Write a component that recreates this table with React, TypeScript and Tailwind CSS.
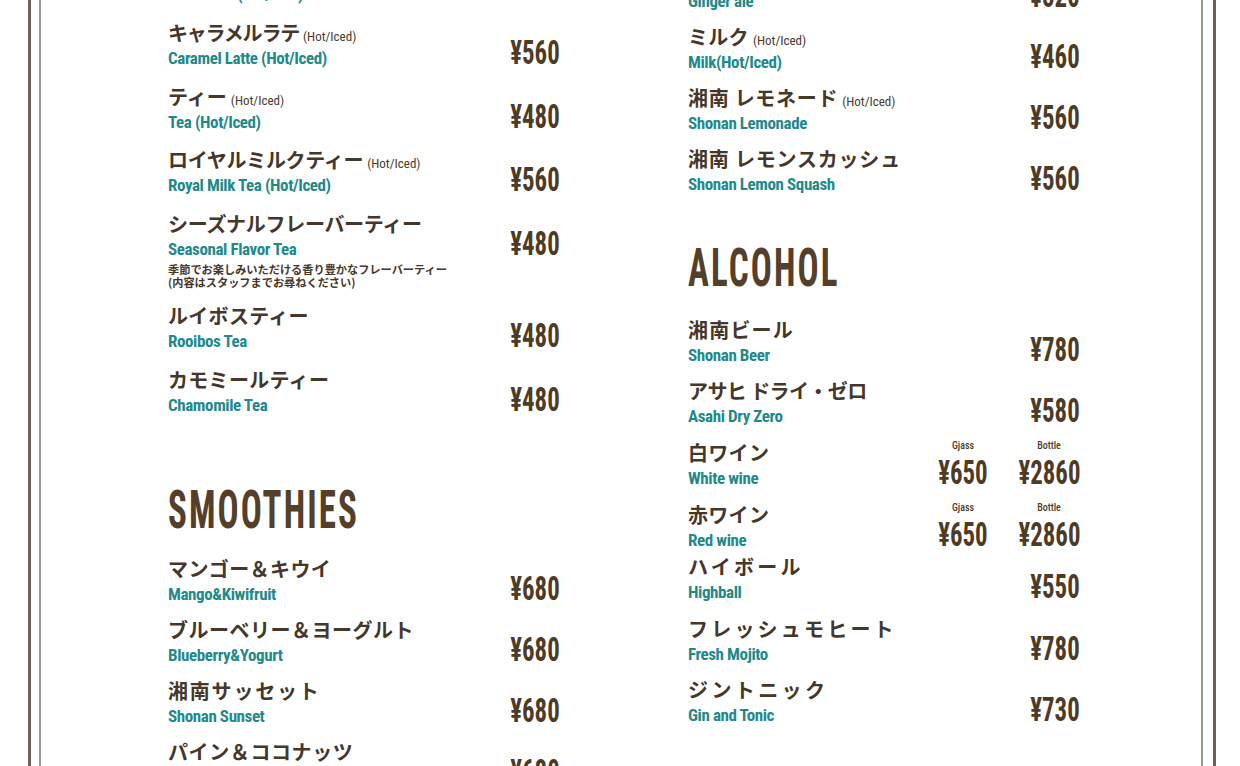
type Item = {
  jp: string;
  note?: string;
  en: string;
  price?: string;
  wine?: [string, string];
  desc?: string[];
  mt: string;
  jpClass?: string;
};

const leftTop: Item[] = [
  { jp: "カフェラテ", note: "(Hot/Iced)", en: "Cafe Latte (Hot/Iced)", price: "¥520", mt: "mt-0" },
  { jp: "キャラメルラテ", note: "(Hot/Iced)", en: "Caramel Latte (Hot/Iced)", price: "¥560", mt: "mt-[16px]", jpClass: "tracking-[-1.2px]" },
  { jp: "ティー", note: "(Hot/Iced)", en: "Tea (Hot/Iced)", price: "¥480", mt: "mt-[16px]" },
  { jp: "ロイヤルミルクティー", note: "(Hot/Iced)", en: "Royal Milk Tea (Hot/Iced)", price: "¥560", mt: "mt-[15px]", jpClass: "tracking-[-0.3px]" },
  {
    jp: "シーズナルフレーバーティー",
    en: "Seasonal Flavor Tea",
    price: "¥480",
    desc: ["季節でお楽しみいただける香り豊かなフレーバーティー", "(内容はスタッフまでお尋ねください)"],
    mt: "mt-[16px]",
    jpClass: "tracking-[-0.3px]",
  },
  { jp: "ルイボスティー", en: "Rooibos Tea", price: "¥480", mt: "mt-[17px]", jpClass: "tracking-[0.3px]" },
  { jp: "カモミールティー", en: "Chamomile Tea", price: "¥480", mt: "mt-[16px]", jpClass: "tracking-[0.3px]" },
];

const smoothies: Item[] = [
  { jp: "マンゴー＆キウイ", en: "Mango&Kiwifruit", price: "¥680", mt: "mt-[19px]", jpClass: "tracking-[0.4px]" },
  { jp: "ブルーベリー＆ヨーグルト", en: "Blueberry&Yogurt", price: "¥680", mt: "mt-[13px]", jpClass: "tracking-[0.5px]" },
  { jp: "湘南サッセット", en: "Shonan Sunset", price: "¥680", mt: "mt-[13px]", jpClass: "tracking-[1.8px]" },
  { jp: "パイン＆ココナッツ", en: "Pineapple&Coconut", price: "¥680", mt: "mt-[13px]", jpClass: "tracking-[0.6px]" },
];

const rightTop: Item[] = [
  { jp: "ジンジャーエール", en: "Ginger ale", price: "¥520", mt: "mt-0" },
  { jp: "ミルク", note: "(Hot/Iced)", en: "Milk(Hot/Iced)", price: "¥460", mt: "mt-[13px]", jpClass: "tracking-[0.3px]" },
  { jp: "湘南 レモネード", note: "(Hot/Iced)", en: "Shonan Lemonade", price: "¥560", mt: "mt-[13px]", jpClass: "tracking-[0.7px]" },
  { jp: "湘南 レモンスカッシュ", en: "Shonan Lemon Squash", price: "¥560", mt: "mt-[13px]", jpClass: "tracking-[0.8px]" },
];

const alcohol: Item[] = [
  { jp: "湘南ビール", en: "Shonan Beer", price: "¥780", mt: "mt-[22px]", jpClass: "tracking-[1.2px]" },
  { jp: "アサヒ ドライ・ゼロ", en: "Asahi Dry Zero", price: "¥580", mt: "mt-[13px]", jpClass: "tracking-[-0.6px]" },
  { jp: "白ワイン", en: "White wine", wine: ["¥650", "¥2860"], mt: "mt-[14px]", jpClass: "tracking-[0.3px]" },
  { jp: "赤ワイン", en: "Red wine", wine: ["¥650", "¥2860"], mt: "mt-[14px]", jpClass: "tracking-[0.3px]" },
  { jp: "ハイボール", en: "Highball", price: "¥550", mt: "mt-[4px]", jpClass: "tracking-[3.2px]" },
  { jp: "フレッシュモヒート", en: "Fresh Mojito", price: "¥780", mt: "mt-[14px]", jpClass: "tracking-[3.2px]" },
  { jp: "ジントニック", en: "Gin and Tonic", price: "¥730", mt: "mt-[13px]", jpClass: "tracking-[3.4px]" },
];

function Price({ value }: { value: string }) {
  return (
    <span className="-mb-[1px] inline-block origin-right scale-x-[0.73] font-['Roboto_Condensed',sans-serif] text-[34px] font-bold leading-none text-[#4e3b25]">
      {value}
    </span>
  );
}

function WineCell({ label, value, w }: { label: string; value: string; w: string }) {
  return (
    <div className={`flex flex-col items-center ${w}`}>
      <span className="mb-[3px] font-['Roboto_Condensed',sans-serif] text-[10px] font-medium leading-[12px] text-[#4e3b25]">
        {label}
      </span>
      <span className="-mb-[1px] inline-block origin-center scale-x-[0.73] font-['Roboto_Condensed',sans-serif] text-[34px] font-bold leading-none text-[#4e3b25]">
        {value}
      </span>
    </div>
  );
}

function MenuItem({ item }: { item: Item }) {
  return (
    <div className={item.mt}>
      <div className="flex items-end justify-between">
        <div className="flex flex-col">
          <div
            className={`h-[26px] whitespace-nowrap font-['Noto_Sans_CJK_JP',sans-serif] text-[20px] font-bold leading-[26px] text-[#45372a] ${item.jpClass ?? ""}`}
          >
            {item.jp}
            {item.note && (
              <span className="ml-1 font-['Roboto_Condensed',sans-serif] text-[13px] font-normal leading-none tracking-normal text-[#4a3b2c]">
                {item.note}
              </span>
            )}
          </div>
          <div className="mt-[2px] font-['Roboto_Condensed',sans-serif] text-[17px] font-bold leading-[20px] tracking-[-0.4px] text-[#1f8a8a]">
            {item.en}
          </div>
        </div>
        {item.price && <Price value={item.price} />}
        {item.wine && (
          <div className="flex gap-[30px]">
            <WineCell label="Gjass" value={item.wine[0]} w="w-[50px]" />
            <WineCell label="Bottle" value={item.wine[1]} w="w-[62px]" />
          </div>
        )}
      </div>
      {item.desc && (
        <div className="mt-1 -mb-[3px] font-['Noto_Sans_CJK_JP',sans-serif] text-[11.2px] font-semibold leading-[13px] text-[#45372a]">
          {item.desc.map((d) => (
            <div key={d}>{d}</div>
          ))}
        </div>
      )}
    </div>
  );
}

function Heading({ text, mt }: { text: string; mt: string }) {
  return (
    <div className={`${mt} h-[53px]`}>
      <div className="inline-block origin-left scale-x-[0.66] font-['Roboto_Condensed',sans-serif] text-[53px] font-bold leading-none tracking-[0.06em] text-[#54402a]">
        {text}
      </div>
    </div>
  );
}

export default function App() {
  return (
    <div className="h-[766px] w-[1240px] overflow-hidden bg-white">
      <div className="ml-[28px] h-full w-[1188px] border-x-[3px] border-[#6e6158] pl-[8px] pr-[10px]">
        <div className="h-full border-x-2 border-[#9d9791] pl-[127px]">
          <div className="grid grid-cols-[392px_392px] gap-x-[128px]">
            <div className="-mt-[44px] flex flex-col">
              {leftTop.map((it) => (
                <MenuItem key={it.jp} item={it} />
              ))}
              <Heading text="SMOOTHIES" mt="mt-[69px]" />
              {smoothies.map((it) => (
                <MenuItem key={it.jp} item={it} />
              ))}
            </div>
            <div className="-mt-[37px] flex flex-col">
              {rightTop.map((it) => (
                <MenuItem key={it.jp} item={it} />
              ))}
              <Heading text="ALCOHOL" mt="mt-[48px]" />
              {alcohol.map((it) => (
                <MenuItem key={it.jp} item={it} />
              ))}
            </div>
          </div>
        </div>
      </div>
    </div>
  );
}
